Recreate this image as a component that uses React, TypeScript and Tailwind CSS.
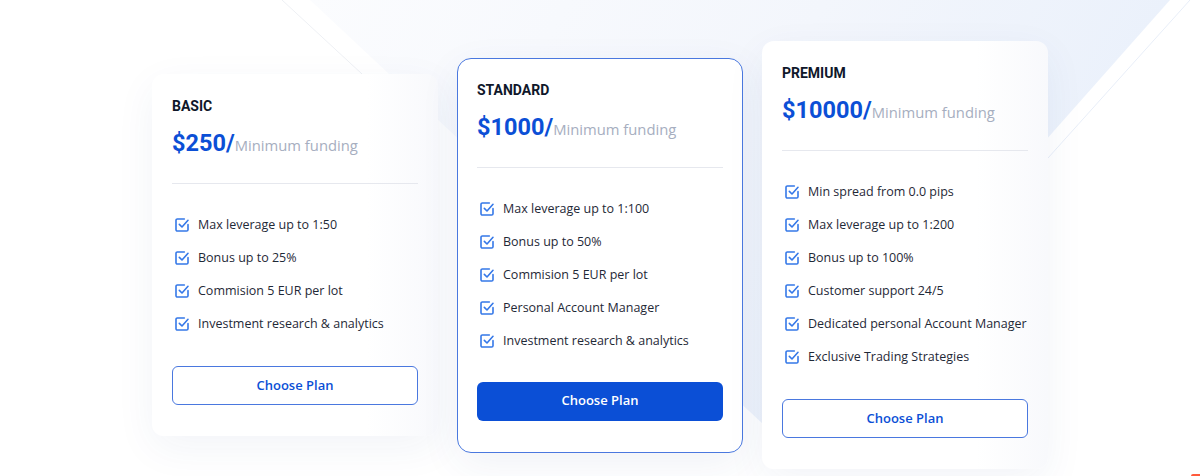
import React from "react";

type Plan = {
  name: string;
  price: string;
  features: string[];
  featured?: boolean;
};

const plans: Plan[] = [
  {
    name: "BASIC",
    price: "$250/",
    features: [
      "Max leverage up to 1:50",
      "Bonus up to 25%",
      "Commision 5 EUR per lot",
      "Investment research & analytics",
    ],
  },
  {
    name: "STANDARD",
    price: "$1000/",
    featured: true,
    features: [
      "Max leverage up to 1:100",
      "Bonus up to 50%",
      "Commision 5 EUR per lot",
      "Personal Account Manager",
      "Investment research & analytics",
    ],
  },
  {
    name: "PREMIUM",
    price: "$10000/",
    features: [
      "Min spread from 0.0 pips",
      "Max leverage up to 1:200",
      "Bonus up to 100%",
      "Customer support 24/5",
      "Dedicated personal Account Manager",
      "Exclusive Trading Strategies",
    ],
  },
];

function CheckIcon() {
  return (
    <svg
      width="16"
      height="16"
      viewBox="0 0 24 24"
      fill="none"
      stroke="#3578e8"
      strokeWidth="2.4"
      strokeLinecap="round"
      strokeLinejoin="round"
      className="shrink-0"
    >
      <path d="M21 11.5V19a2 2 0 0 1-2 2H5a2 2 0 0 1-2-2V5a2 2 0 0 1 2-2h10.5" />
      <path d="m8 11 4 4 9-10" />
    </svg>
  );
}

function PlanCard({ plan }: { plan: Plan }) {
  return (
    <div
      className={
        plan.featured
          ? "w-[286px] rounded-[14px] border border-[#4a78df] bg-white px-[19px] pt-[21px] pb-[31px] shadow-[0_12px_40px_rgba(40,70,140,0.07)]"
          : "w-[286px] rounded-[12px] bg-gradient-to-r from-white from-75% to-[#f8f9fc] px-[20px] pt-[22px] pb-[31px] shadow-[0_12px_40px_rgba(40,70,140,0.06)]"
      }
    >
      <h3 className="font-['Roboto',sans-serif] text-[14px] leading-5 font-bold text-[#0f172a]">
        {plan.name}
      </h3>
      <div className="mt-[11px] flex items-baseline leading-8 whitespace-nowrap">
        <span className="font-['Roboto',sans-serif] text-[23.5px] font-bold text-[#0b4fd6]">
          {plan.price}
        </span>
        <span className="font-['Open_Sans',sans-serif] text-[14.8px] text-[#a6aec0]">
          Minimum funding
        </span>
      </div>
      <div className="mt-[22px] h-px bg-[#e6e8ee]" />
      <ul className="mt-[31px] flex flex-col gap-[13px]">
        {plan.features.map((f) => (
          <li key={f} className="flex items-center gap-[8px] pl-[2px] leading-5 whitespace-nowrap">
            <CheckIcon />
            <span className="font-['Open_Sans',sans-serif] text-[12.5px] text-[#1f2937]">{f}</span>
          </li>
        ))}
      </ul>
      <button
        className={
          plan.featured
            ? "mt-[31px] flex h-[39px] w-full items-center justify-center rounded-[6px] bg-[#0b4fd6] font-['Open_Sans',sans-serif] text-[13px] font-semibold text-white"
            : "mt-[32px] flex h-[39px] w-full items-center justify-center rounded-[6px] border border-[#4a78df] bg-white font-['Open_Sans',sans-serif] text-[13px] font-semibold text-[#0b4fd6]"
        }
      >
        Choose Plan
      </button>
    </div>
  );
}

export default function App() {
  return (
    <div className="relative h-[476px] w-[1200px] overflow-hidden bg-white">
      {/* Background shape */}
      <svg className="pointer-events-none absolute inset-0" width="1200" height="476">
        <defs>
          <linearGradient id="bgShape" x1="0" y1="0" x2="1" y2="0.3">
            <stop offset="0%" stopColor="#fbfcfe" />
            <stop offset="55%" stopColor="#f3f6fc" />
            <stop offset="100%" stopColor="#e9f0fb" />
          </linearGradient>
        </defs>
        <polygon points="310,0 1170,0 780,440" fill="url(#bgShape)" />
        <line x1="282" y1="0" x2="362" y2="74" stroke="#eef0f4" strokeWidth="1" />
        <line x1="1190" y1="0" x2="1048" y2="158" stroke="#e8eef8" strokeWidth="1" />
      </svg>

      <div className="relative flex items-center justify-center gap-[19px] pt-[41px]">
        {plans.map((p) => (
          <PlanCard key={p.name} plan={p} />
        ))}
      </div>

      <span className="absolute right-0 bottom-0 h-[2px] w-[9px] rounded-tl-[2px] bg-[#ff5a3c]" />
    </div>
  );
}
